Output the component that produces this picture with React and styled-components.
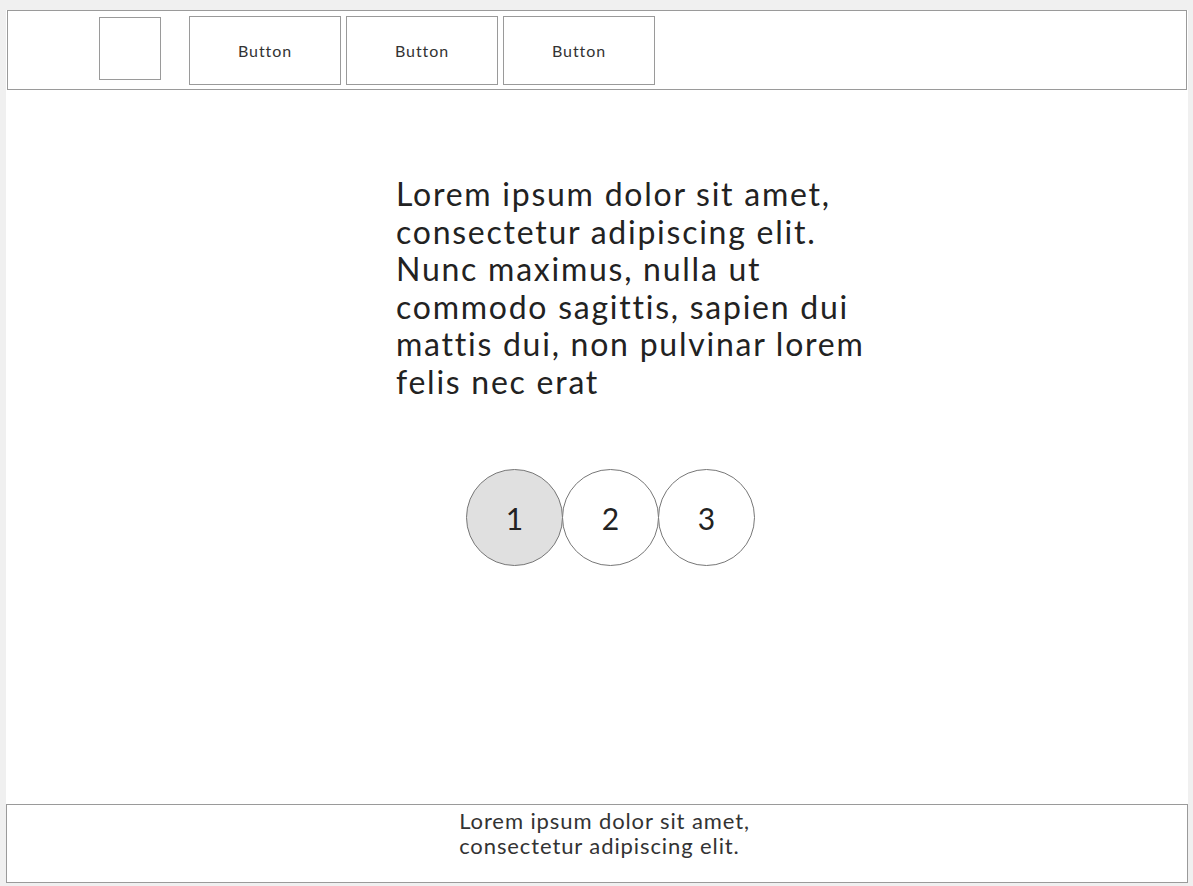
import React from "react";
import styled, { createGlobalStyle } from "styled-components";

const Global = createGlobalStyle`
  html, body {
    margin: 0;
    padding: 0;
    background: #f0f0f0;
  }
  body {
    font-family: Lato, "Noto Sans", sans-serif;
    color: #222;
  }
`;

const Page = styled.div`
  display: flex;
  flex-direction: column;
  width: 1182px;
  height: 873px;
  margin: 10px 0 0 6px;
  background: #fff;
`;

const Header = styled.header`
  display: flex;
  align-items: center;
  height: 78px;
  margin: 0 1px;
  padding-left: 91px;
  border: 1px solid #9a9a9a;
  box-sizing: content-box;
`;

const Logo = styled.div`
  width: 60px;
  height: 61px;
  border: 1px solid #9a9a9a;
  margin-right: 28px;
  margin-bottom: 4px;
`;

const Nav = styled.nav`
  display: flex;
  gap: 5px;
`;

const NavButton = styled.button`
  width: 152px;
  height: 69px;
  border: 1px solid #9a9a9a;
  background: #fff;
  font-family: Lato, "Noto Sans", sans-serif;
  font-size: 16px;
  letter-spacing: 0.9px;
  color: #333;
  padding: 0;
`;

const Main = styled.main`
  flex: 1;
  display: flex;
  flex-direction: column;
`;

const Intro = styled.p`
  margin: 85px 0 0 390px;
  font-size: 32px;
  line-height: 37.5px;
  letter-spacing: 1.75px;
  color: #222;
`;

const Steps = styled.div`
  display: flex;
  margin: 69px 0 0 460px;
`;

const Step = styled.div`
  width: 95px;
  height: 95px;
  border-radius: 50%;
  border: 1px solid #777;
  margin-right: -1px;
  display: flex;
  align-items: center;
  justify-content: center;
  font-size: 30px;
  background: ${({ $active }) => ($active ? "#e0e0e0" : "#fff")};
`;

const Footer = styled.footer`
  border: 1px solid #9a9a9a;
  display: flex;
  justify-content: center;
  padding-top: 3px;
  box-sizing: border-box;
  height: 79px;
`;

const FooterText = styled.p`
  margin: 0 0 0 15px;
  font-size: 22px;
  line-height: 25px;
  letter-spacing: 0.9px;
  color: #333;
`;

export default function App() {
  return (
    <>
      <Global />
      <Page>
        <Header>
          <Logo />
          <Nav>
            <NavButton>Button</NavButton>
            <NavButton>Button</NavButton>
            <NavButton>Button</NavButton>
          </Nav>
        </Header>
        <Main>
          <Intro>
            Lorem ipsum dolor sit amet,
            <br />
            consectetur adipiscing elit.
            <br />
            Nunc maximus, nulla ut
            <br />
            commodo sagittis, sapien dui
            <br />
            mattis dui, non pulvinar lorem
            <br />
            felis nec erat
          </Intro>
          <Steps>
            <Step $active>1</Step>
            <Step>2</Step>
            <Step>3</Step>
          </Steps>
        </Main>
        <Footer>
          <FooterText>
            Lorem ipsum dolor sit amet,
            <br />
            consectetur adipiscing elit.
          </FooterText>
        </Footer>
      </Page>
    </>
  );
}
